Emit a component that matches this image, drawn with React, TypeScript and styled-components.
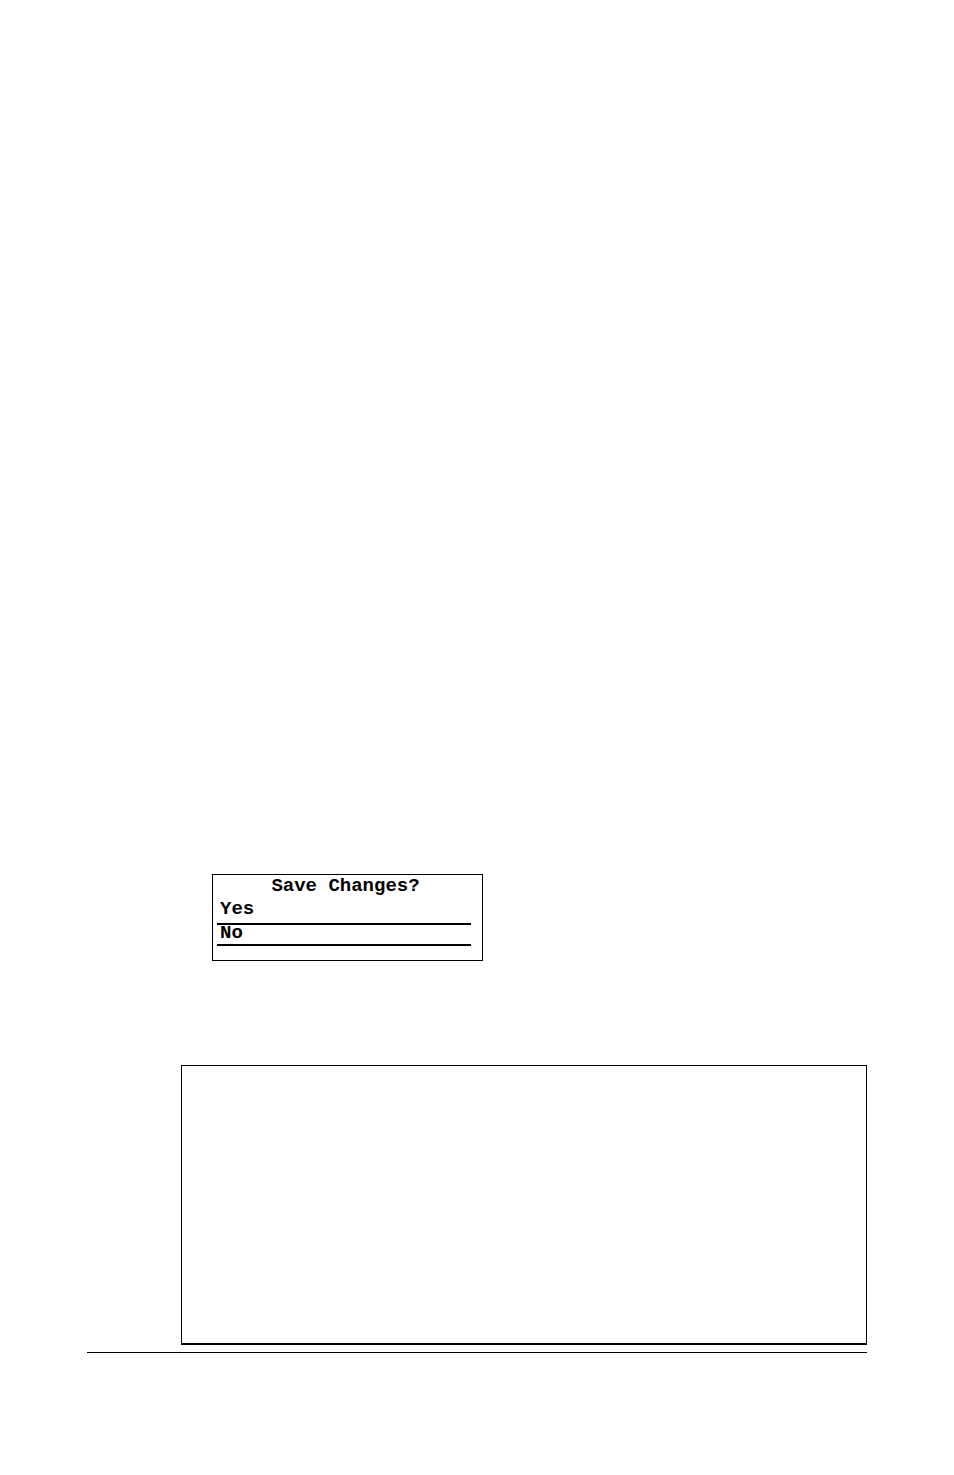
import styled, { createGlobalStyle } from "styled-components";

const GlobalStyle = createGlobalStyle`
  *, *::before, *::after {
    box-sizing: border-box;
  }

  body {
    margin: 0;
    background: #fff;
    color: #000;
    font-family: "Liberation Mono", monospace;
    font-size: 19px;
    font-weight: 700;
    line-height: 16px;
  }
`;

const Page = styled.main`
  display: flex;
  flex-direction: column;
  padding: 874px 87px 122px;
`;

const Screen = styled.section`
  display: flex;
  flex-direction: column;
  width: 271px;
  margin-left: 125px;
  padding: 3px 11px 14px 4px;
  border: 1px solid #000;
`;

const Title = styled.h1`
  margin: 0;
  padding-left: 3px;
  font: inherit;
  text-align: center;
`;

const Option = styled.button<{ $spaced?: boolean }>`
  display: block;
  width: 100%;
  padding: ${({ $spaced }) => ($spaced ? "7px 3px 6px" : "0 3px 3px")};
  border: 0;
  border-bottom: 2px solid #000;
  background: none;
  color: inherit;
  font: inherit;
  text-align: left;
`;

const NoteBox = styled.section`
  height: 280px;
  margin: 104px 0 7px 94px;
  border: 1px solid #000;
  border-bottom-width: 2px;
`;

const FooterRule = styled.hr`
  width: 100%;
  margin: 0;
  border: 0;
  border-top: 1px solid #000;
`;

export default function App() {
  return (
    <>
      <GlobalStyle />
      <Page>
        <Screen>
          <Title>Save Changes?</Title>
          <Option type="button" $spaced>
            Yes
          </Option>
          <Option type="button">No</Option>
        </Screen>
        <NoteBox />
        <FooterRule />
      </Page>
    </>
  );
}
